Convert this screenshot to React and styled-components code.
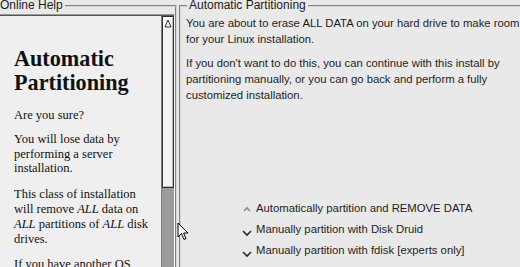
import React from 'react';
import styled, { createGlobalStyle } from 'styled-components';

const Global = createGlobalStyle`
  html, body {
    margin: 0;
    padding: 0;
    background: #e9e9e9;
  }
`;

const Screen = styled.div`
  position: relative;
  width: 520px;
  height: 267px;
  overflow: hidden;
  display: flex;
  align-items: flex-start;
  background: #e9e9e9;
  font-family: "Liberation Sans", Arial, sans-serif;
  color: #1c1c1c;
`;

const Frame = styled.fieldset`
  box-sizing: border-box;
  margin: 0 0 0 ${p => p.$offset}px;
  padding: ${p => p.$pad};
  width: ${p => p.$width}px;
  height: 290px;
  flex-shrink: 0;
  border: 2px groove #d6d6d6;
  min-width: 0;
`;

const Legend = styled.legend`
  font-size: 12px;
  line-height: 11px;
  padding: 0 2px 0 ${p => p.$lead}px;
  margin-left: ${p => p.$shift}px;
  color: #1c1c1c;
`;

const Scrolled = styled.div`
  margin-top: 3px;
  height: 270px;
  display: flex;
  border-top: 1px solid #9a9a9a;
  border-left: 1px solid #9a9a9a;
  border-right: 1px solid #ffffff;
  box-shadow: inset 0 1px 0 #555;
  padding-top: 1px;
  background: #efefef;
`;

const HelpText = styled.div`
  flex: 1;
  padding: 31px 8px 0 16px;
  font-family: "Liberation Serif", "Times New Roman", serif;
  color: #111;
`;

const HelpTitle = styled.h1`
  margin: 0;
  font-size: 22.2px;
  line-height: 24px;
  font-weight: bold;
`;

const HelpPara = styled.p`
  margin: ${p => p.$top || 11}px 0 0;
  font-size: 12.5px;
  line-height: 14.8px;
`;

const Scrollbar = styled.div`
  width: 12px;
  flex-shrink: 0;
  background: #9c9c9c;
  border-left: 1px solid #7e7e7e;
  display: flex;
  flex-direction: column;
`;

const Slider = styled.div`
  box-sizing: border-box;
  height: 172px;
  background: #f4f4f4;
  border: 1px solid #2e2e2e;
  box-shadow: inset 1px 1px 0 #fff, inset -1px -1px 0 #b8b8b8;
  display: flex;
  justify-content: center;
  padding-top: 2px;
`;

const Body = styled.div`
  font-size: 11.3px;
  line-height: 16px;
  color: #1e1e1e;
  white-space: nowrap;
`;

const Para = styled.p`
  margin: ${p => p.$top}px 0 0;
`;

const Options = styled.div`
  margin-top: 95px;
  padding-left: 56px;
  display: flex;
  flex-direction: column;
`;

const Option = styled.div`
  height: 21px;
  line-height: 21px;
  display: flex;
  align-items: center;
  gap: 4px;
`;

const Mark = styled.svg`
  width: 10px;
  height: 8px;
  flex-shrink: 0;
  margin-top: ${p => p.$dy}px;
`;

const Pointer = styled.svg`
  position: absolute;
  left: 177px;
  top: 222px;
  width: 12px;
  height: 19px;
`;

const RadioMark = ({ on }) =>
  on ? (
    <Mark $dy={0} viewBox="0 0 10 8">
      <polyline points="2,6 5,3 8,6" fill="none" stroke="#8a8a8a" strokeWidth="1.6" />
    </Mark>
  ) : (
    <Mark $dy={6} viewBox="0 0 10 8">
      <polyline points="1,2 5,6 9,2" fill="none" stroke="#2a2a2a" strokeWidth="1.6" />
    </Mark>
  );

const options = [
  { label: 'Automatically partition and REMOVE DATA', on: true },
  { label: 'Manually partition with Disk Druid', on: false },
  { label: 'Manually partition with fdisk [experts only]', on: false },
];

export default function App() {
  return (
    <>
      <Global />
      <Screen>
        <Frame $offset={-5} $width={182} $pad="0">
          <Legend $lead={3} $shift={0}>Online Help</Legend>
          <Scrolled>
            <HelpText>
              <HelpTitle>Automatic Partitioning</HelpTitle>
              <HelpPara $top={13}>Are you sure?</HelpPara>
              <HelpPara $top={9}>You will lose data by performing a server installation.</HelpPara>
              <HelpPara>
                This class of installation will remove <i>ALL</i> data on <i>ALL</i> partitions of <i>ALL</i> disk drives.
              </HelpPara>
              <HelpPara>If you have another OS installed that you want to keep, choose a custom install.</HelpPara>
            </HelpText>
            <Scrollbar>
              <Slider>
                <svg width="8" height="9" viewBox="0 0 8 9">
                  <polygon points="4,1 7,8 1,8" fill="#fafafa" stroke="#333" strokeWidth="1" />
                </svg>
              </Slider>
            </Scrollbar>
          </Scrolled>
        </Frame>

        <Frame $offset={2} $width={360} $pad="4px 0 0 5px">
          <Legend $lead={2} $shift={1}>Automatic Partitioning</Legend>
          <Body>
            <Para $top={0}>
              You are about to erase ALL DATA on your hard drive to make room
              <br />
              for your Linux installation.
            </Para>
            <Para $top={8}>
              If you don't want to do this, you can continue with this install by
              <br />
              partitioning manually, or you can go back and perform a fully
              <br />
              customized installation.
            </Para>
            <Options>
              {options.map(o => (
                <Option key={o.label}>
                  <RadioMark on={o.on} />
                  {o.label}
                </Option>
              ))}
            </Options>
          </Body>
        </Frame>

        <Pointer viewBox="0 0 12 19">
          <path d="M1 1 L1 15 L4.5 11.5 L7 17.5 L9 16.6 L6.6 11 L11 11 Z" fill="#fff" stroke="#000" strokeWidth="1" strokeLinejoin="round" />
        </Pointer>
      </Screen>
    </>
  );
}
